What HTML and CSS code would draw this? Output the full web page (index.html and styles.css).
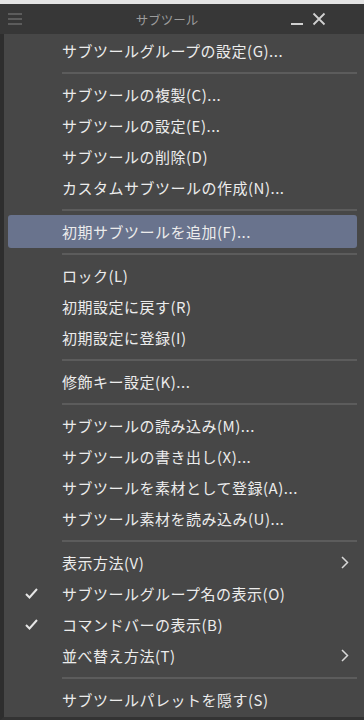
FILE: index.html
```html
<!DOCTYPE html>
<html lang="ja">
<head>
<meta charset="utf-8">
<link rel="stylesheet" href="styles.css">
</head>
<body>
<div class="window">
  <div class="titlebar">
    <svg class="hamburger" width="14" height="12" viewBox="0 0 14 12"><rect x="0" y="0" width="14" height="2" fill="#5c5c5c"/><rect x="0" y="5" width="14" height="2" fill="#5c5c5c"/><rect x="0" y="10" width="14" height="2" fill="#5c5c5c"/></svg>
    <span class="title">サブツール</span>
    <div class="controls">
      <svg width="14" height="14" viewBox="0 0 14 14"><rect x="1" y="11" width="12" height="2" fill="#d0d0d0"/></svg>
      <svg width="14" height="14" viewBox="0 0 14 14"><path d="M1.5 1.5 L12.5 12.5 M12.5 1.5 L1.5 12.5" stroke="#d0d0d0" stroke-width="1.8"/></svg>
    </div>
  </div>
  <div class="menu">
    <div class="item">サブツールグループの設定(G)...</div>
    <div class="sep"></div>
    <div class="item">サブツールの複製(C)...</div>
    <div class="item">サブツールの設定(E)...</div>
    <div class="item">サブツールの削除(D)</div>
    <div class="item">カスタムサブツールの作成(N)...</div>
    <div class="sep"></div>
    <div class="item active">初期サブツールを追加(F)...</div>
    <div class="sep"></div>
    <div class="item">ロック(L)</div>
    <div class="item">初期設定に戻す(R)</div>
    <div class="item">初期設定に登録(I)</div>
    <div class="sep"></div>
    <div class="item">修飾キー設定(K)...</div>
    <div class="sep"></div>
    <div class="item">サブツールの読み込み(M)...</div>
    <div class="item">サブツールの書き出し(X)...</div>
    <div class="item">サブツールを素材として登録(A)...</div>
    <div class="item">サブツール素材を読み込み(U)...</div>
    <div class="sep"></div>
    <div class="item sub">表示方法(V)<svg class="chev" width="8" height="13" viewBox="0 0 8 13"><path d="M1 1 L6.5 6.5 L1 12" fill="none" stroke="#d8d8d8" stroke-width="1.5"/></svg></div>
    <div class="item"><svg class="check" width="13" height="11" viewBox="0 0 13 11"><path d="M1 6 L4.5 9.5 L12 1" fill="none" stroke="#e6e6e6" stroke-width="2"/></svg>サブツールグループ名の表示(O)</div>
    <div class="item"><svg class="check" width="13" height="11" viewBox="0 0 13 11"><path d="M1 6 L4.5 9.5 L12 1" fill="none" stroke="#e6e6e6" stroke-width="2"/></svg>コマンドバーの表示(B)</div>
    <div class="item sub">並べ替え方法(T)<svg class="chev" width="8" height="13" viewBox="0 0 8 13"><path d="M1 1 L6.5 6.5 L1 12" fill="none" stroke="#d8d8d8" stroke-width="1.5"/></svg></div>
    <div class="sep"></div>
    <div class="item">サブツールパレットを隠す(S)</div>
  </div>
</div>
</body>
</html>
```
FILE: styles.css
```css
html, body {
  margin: 0;
  padding: 0;
  background: #e4e4e4;
}
body {
  width: 364px;
  height: 720px;
  overflow: hidden;
  font-family: "Noto Sans CJK JP", "Noto Sans", sans-serif;
}
.window {
  margin-top: 4px;
  height: 716px;
  box-sizing: border-box;
  border-left: 4px solid #2e2e2e;
  border-bottom: 3px solid #333333;
  background: #474747;
  display: flex;
  flex-direction: column;
}
.titlebar {
  height: 30px;
  background: #373737;
  display: flex;
  align-items: center;
  position: relative;
  margin-left: -4px;
  padding-left: 8px;
}
.hamburger {
  display: block;
}
.title {
  position: absolute;
  left: 0;
  right: 30px;
  text-align: center;
  font-size: 12.5px;
  color: #9c9c9c;
  pointer-events: none;
}
.controls {
  margin-left: auto;
  margin-right: 38px;
  display: flex;
  gap: 8px;
  align-items: center;
}
.controls svg {
  display: block;
}
.menu {
  display: flex;
  flex-direction: column;
  padding-top: 1px;
}
.item {
  height: 31px;
  margin: 0 7px 0 4px;
  padding: 0 8px 0 54px;
  display: flex;
  align-items: center;
  font-size: 15px;
  letter-spacing: 0.5px;
  color: #ececec;
  position: relative;
  border-radius: 3px;
  white-space: nowrap;
}
.item.active {
  background: #69738d;
  height: 33px;
  margin-top: -1px;
  margin-bottom: -1px;
}
.chev {
  margin-left: auto;
}
.check {
  position: absolute;
  left: 17px;
  top: 10px;
}
.sep {
  height: 2px;
  margin: 6px 7px 5px 58px;
  background: #5c5c5c;
}
```
